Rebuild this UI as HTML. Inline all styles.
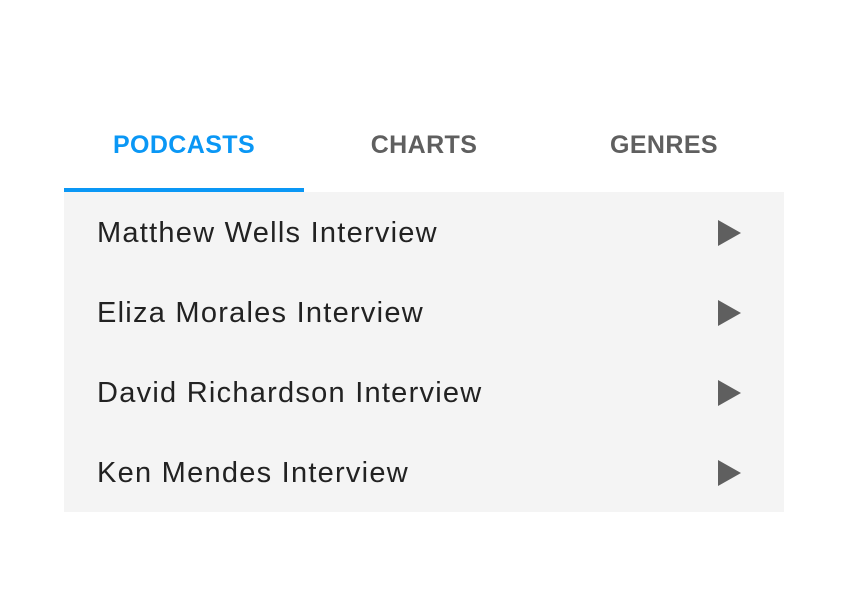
<!DOCTYPE html>
<html><head><style>
body{margin:0;background:#fff;width:848px;height:610px;font-family:"Liberation Sans",sans-serif;}
.tabs{position:absolute;left:64px;top:120px;width:720px;height:72px;display:flex;}
.tab{width:240px;text-align:center;font-weight:bold;font-size:25px;letter-spacing:0.4px;color:#5f5f5f;line-height:50px;position:relative}
.tab.a{color:#0a97f5}
.tab.a:after{content:"";position:absolute;left:0;right:0;top:68px;height:4px;background:#0a97f5}
.list{position:absolute;left:64px;top:192px;width:720px;height:320px;background:#f4f4f4}
.row{height:80px;position:relative}
.row span{position:absolute;left:33px;top:25px;font-size:29px;color:#222;letter-spacing:1.25px}
.row i{position:absolute;left:654px;top:28px;width:0;height:0;border-left:23px solid #5f5f5f;border-top:13px solid transparent;border-bottom:13px solid transparent}
</style></head><body>
<div class="tabs"><div class="tab a">PODCASTS</div><div class="tab">CHARTS</div><div class="tab">GENRES</div></div>
<div class="list">
<div class="row"><span>Matthew Wells Interview</span><i></i></div>
<div class="row"><span>Eliza Morales Interview</span><i></i></div>
<div class="row"><span>David Richardson Interview</span><i></i></div>
<div class="row"><span>Ken Mendes Interview</span><i></i></div>
</div>
</body></html>
